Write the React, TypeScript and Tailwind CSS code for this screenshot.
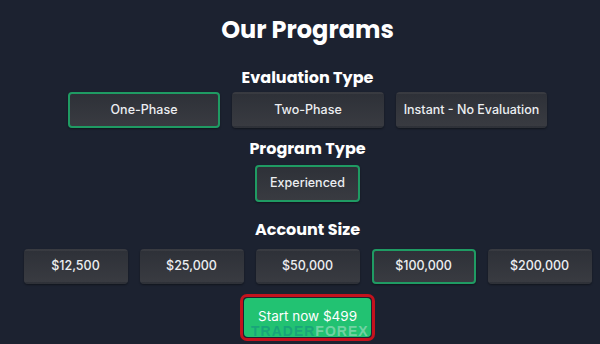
import React from "react";

const heading = { fontFamily: '"Poppins", "Open Sans", "Noto Sans", sans-serif' };
const body = { fontFamily: 'Inter, "Liberation Sans", sans-serif' };

function Opt({ label, active, w }: { label: string; active?: boolean; w: string }) {
  return (
    <div
      className={`${w} flex items-center justify-center rounded-[4px] bg-gradient-to-b from-[#2e3138] to-[#393b41] text-[12.5px] font-medium text-[#eceef1] shadow-[0_1px_2px_rgba(0,0,0,0.4)] ${
        active ? "border-2 border-[#1f9b63]" : "border-2 border-transparent"
      }`}
      style={body}
    >
      {label}
    </div>
  );
}

export default function App() {
  return (
    <div className="w-[600px] h-[344px] overflow-hidden bg-[#1c2230] pl-[15px] flex flex-col items-center">
      <h1 className="mt-[12px] h-[36px] leading-[36px] text-[24px] font-bold text-white" style={heading}>
        Our Programs
      </h1>
      <h2 className="mt-[18px] h-[24px] leading-[24px] text-[16px] font-bold text-white" style={heading}>
        Evaluation Type
      </h2>
      <div className="mt-[2px] flex gap-[12px]">
        <Opt label="One-Phase" active w="w-[152px] h-[36px]" />
        <Opt label="Two-Phase" w="w-[152px] h-[36px]" />
        <Opt label="Instant - No Evaluation" w="w-[151px] h-[36px]" />
      </div>
      <h2 className="mt-[9px] h-[24px] leading-[24px] text-[16px] font-bold text-white" style={heading}>
        Program Type
      </h2>
      <div className="mt-[4px] flex">
        <Opt label="Experienced" active w="w-[105px] h-[37px]" />
      </div>
      <h2 className="mt-[16px] h-[24px] leading-[24px] text-[16px] font-bold text-white" style={heading}>
        Account Size
      </h2>
      <div className="mt-[7px] flex gap-[12px]">
        <Opt label="$12,500" w="w-[104px] h-[35px]" />
        <Opt label="$25,000" w="w-[104px] h-[35px]" />
        <Opt label="$50,000" w="w-[104px] h-[35px]" />
        <Opt label="$100,000" active w="w-[104px] h-[35px]" />
        <Opt label="$200,000" w="w-[104px] h-[35px]" />
      </div>
      <div className="relative mt-[10px] w-[135px] h-[47px] rounded-[7px] border-[3px] border-[#c4121d] p-[1px]">
        <div
          className="w-full h-full rounded-[4px] bg-[#22c272] flex items-start justify-center pt-[11px] text-[13.5px] leading-[14px] text-white"
          style={body}
        >
          Start now $499
        </div>
        <div
          className="absolute left-[8px] top-[29px] text-[14px] font-bold tracking-[1px] leading-[11px] h-[11px] whitespace-nowrap"
          style={{ fontFamily: '"Liberation Sans", sans-serif' }}
        >
          <span className="text-[#15977e]/70">TRADER</span>
          <span className="text-[#d8e8e4]/45">FOREX</span>
        </div>
      </div>
    </div>
  );
}
